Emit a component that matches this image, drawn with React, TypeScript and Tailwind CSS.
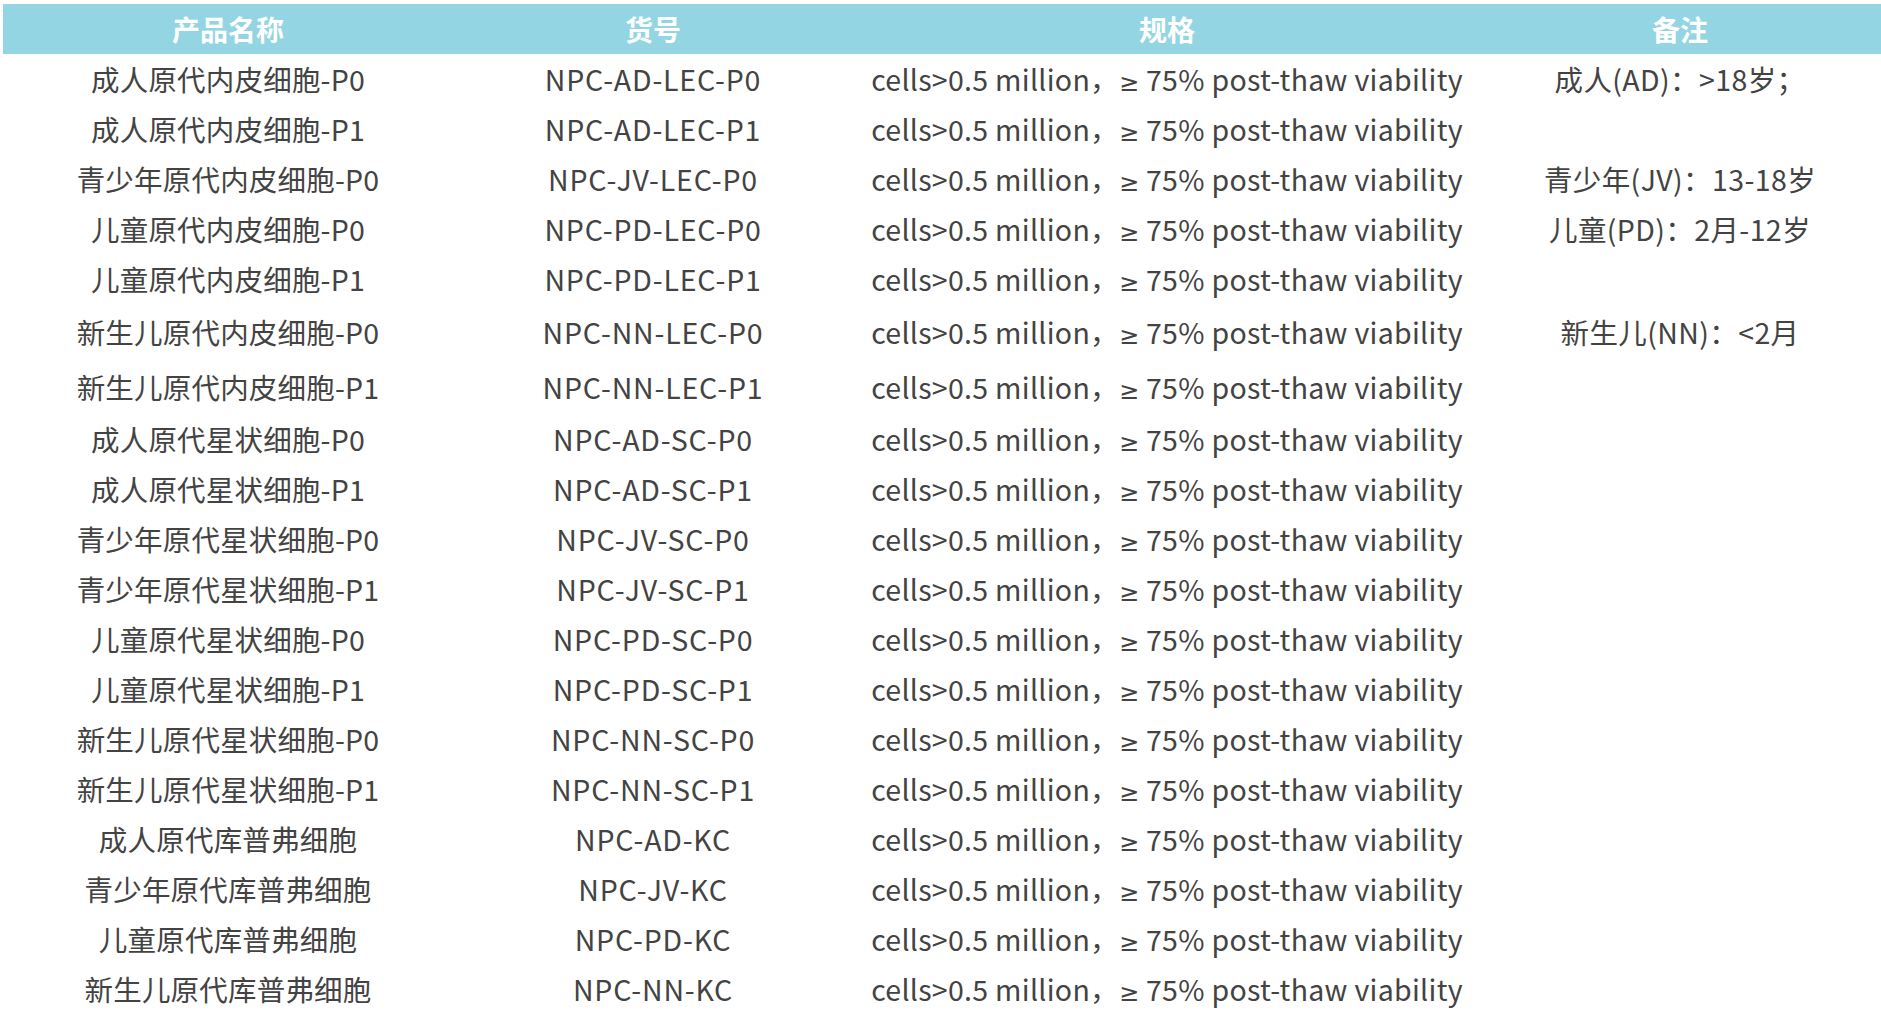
import React from 'react';

type Row = { name: string; code: string; note?: string; h?: string };

const rows: Row[] = [
  { name: '成人原代内皮细胞-P0', code: 'NPC-AD-LEC-P0', note: '成人(AD)：>18岁；' },
  { name: '成人原代内皮细胞-P1', code: 'NPC-AD-LEC-P1' },
  { name: '青少年原代内皮细胞-P0', code: 'NPC-JV-LEC-P0', note: '青少年(JV)：13-18岁' },
  { name: '儿童原代内皮细胞-P0', code: 'NPC-PD-LEC-P0', note: '儿童(PD)：2月-12岁' },
  { name: '儿童原代内皮细胞-P1', code: 'NPC-PD-LEC-P1' },
  { name: '新生儿原代内皮细胞-P0', code: 'NPC-NN-LEC-P0', note: '新生儿(NN)：<2月', h: 'h-[57px]' },
  { name: '新生儿原代内皮细胞-P1', code: 'NPC-NN-LEC-P1', h: 'h-[53px]' },
  { name: '成人原代星状细胞-P0', code: 'NPC-AD-SC-P0' },
  { name: '成人原代星状细胞-P1', code: 'NPC-AD-SC-P1' },
  { name: '青少年原代星状细胞-P0', code: 'NPC-JV-SC-P0' },
  { name: '青少年原代星状细胞-P1', code: 'NPC-JV-SC-P1' },
  { name: '儿童原代星状细胞-P0', code: 'NPC-PD-SC-P0' },
  { name: '儿童原代星状细胞-P1', code: 'NPC-PD-SC-P1' },
  { name: '新生儿原代星状细胞-P0', code: 'NPC-NN-SC-P0' },
  { name: '新生儿原代星状细胞-P1', code: 'NPC-NN-SC-P1' },
  { name: '成人原代库普弗细胞', code: 'NPC-AD-KC' },
  { name: '青少年原代库普弗细胞', code: 'NPC-JV-KC' },
  { name: '儿童原代库普弗细胞', code: 'NPC-PD-KC' },
  { name: '新生儿原代库普弗细胞', code: 'NPC-NN-KC' },
];

const cols = 'grid grid-cols-[450px_400px_628px_398px]';

function Spec() {
  return (
    <div className="text-center tracking-[0.3px]">
      cells&gt;0.5 million，<span className="font-['DejaVu_Sans',sans-serif] text-[24px]">≥</span> 75% post-thaw viability
    </div>
  );
}

export default function App() {
  return (
    <div className="w-[1881px] h-[1018px] overflow-hidden bg-white pl-[3px] pt-[4px] font-['Noto_Sans_CJK_SC','Noto_Sans',sans-serif]">
      <div className={`${cols} h-[50px] items-center bg-[#93d5e2] text-[28px] font-bold text-white`}>
        <div className="text-center">产品名称</div>
        <div className="text-center">货号</div>
        <div className="text-center">规格</div>
        <div className="text-center">备注</div>
      </div>
      <div className="text-[28.5px] text-[#434343]">
        {rows.map((r) => (
          <div key={r.code} className={`${cols} ${r.h ?? 'h-[50px]'} items-center whitespace-nowrap`}>
            <div className="text-center tracking-[0.2px]">{r.name}</div>
            <div className="text-center tracking-[0.8px]">{r.code}</div>
            <Spec />
            <div className="text-center tracking-[0.4px]">{r.note ?? ''}</div>
          </div>
        ))}
      </div>
    </div>
  );
}
